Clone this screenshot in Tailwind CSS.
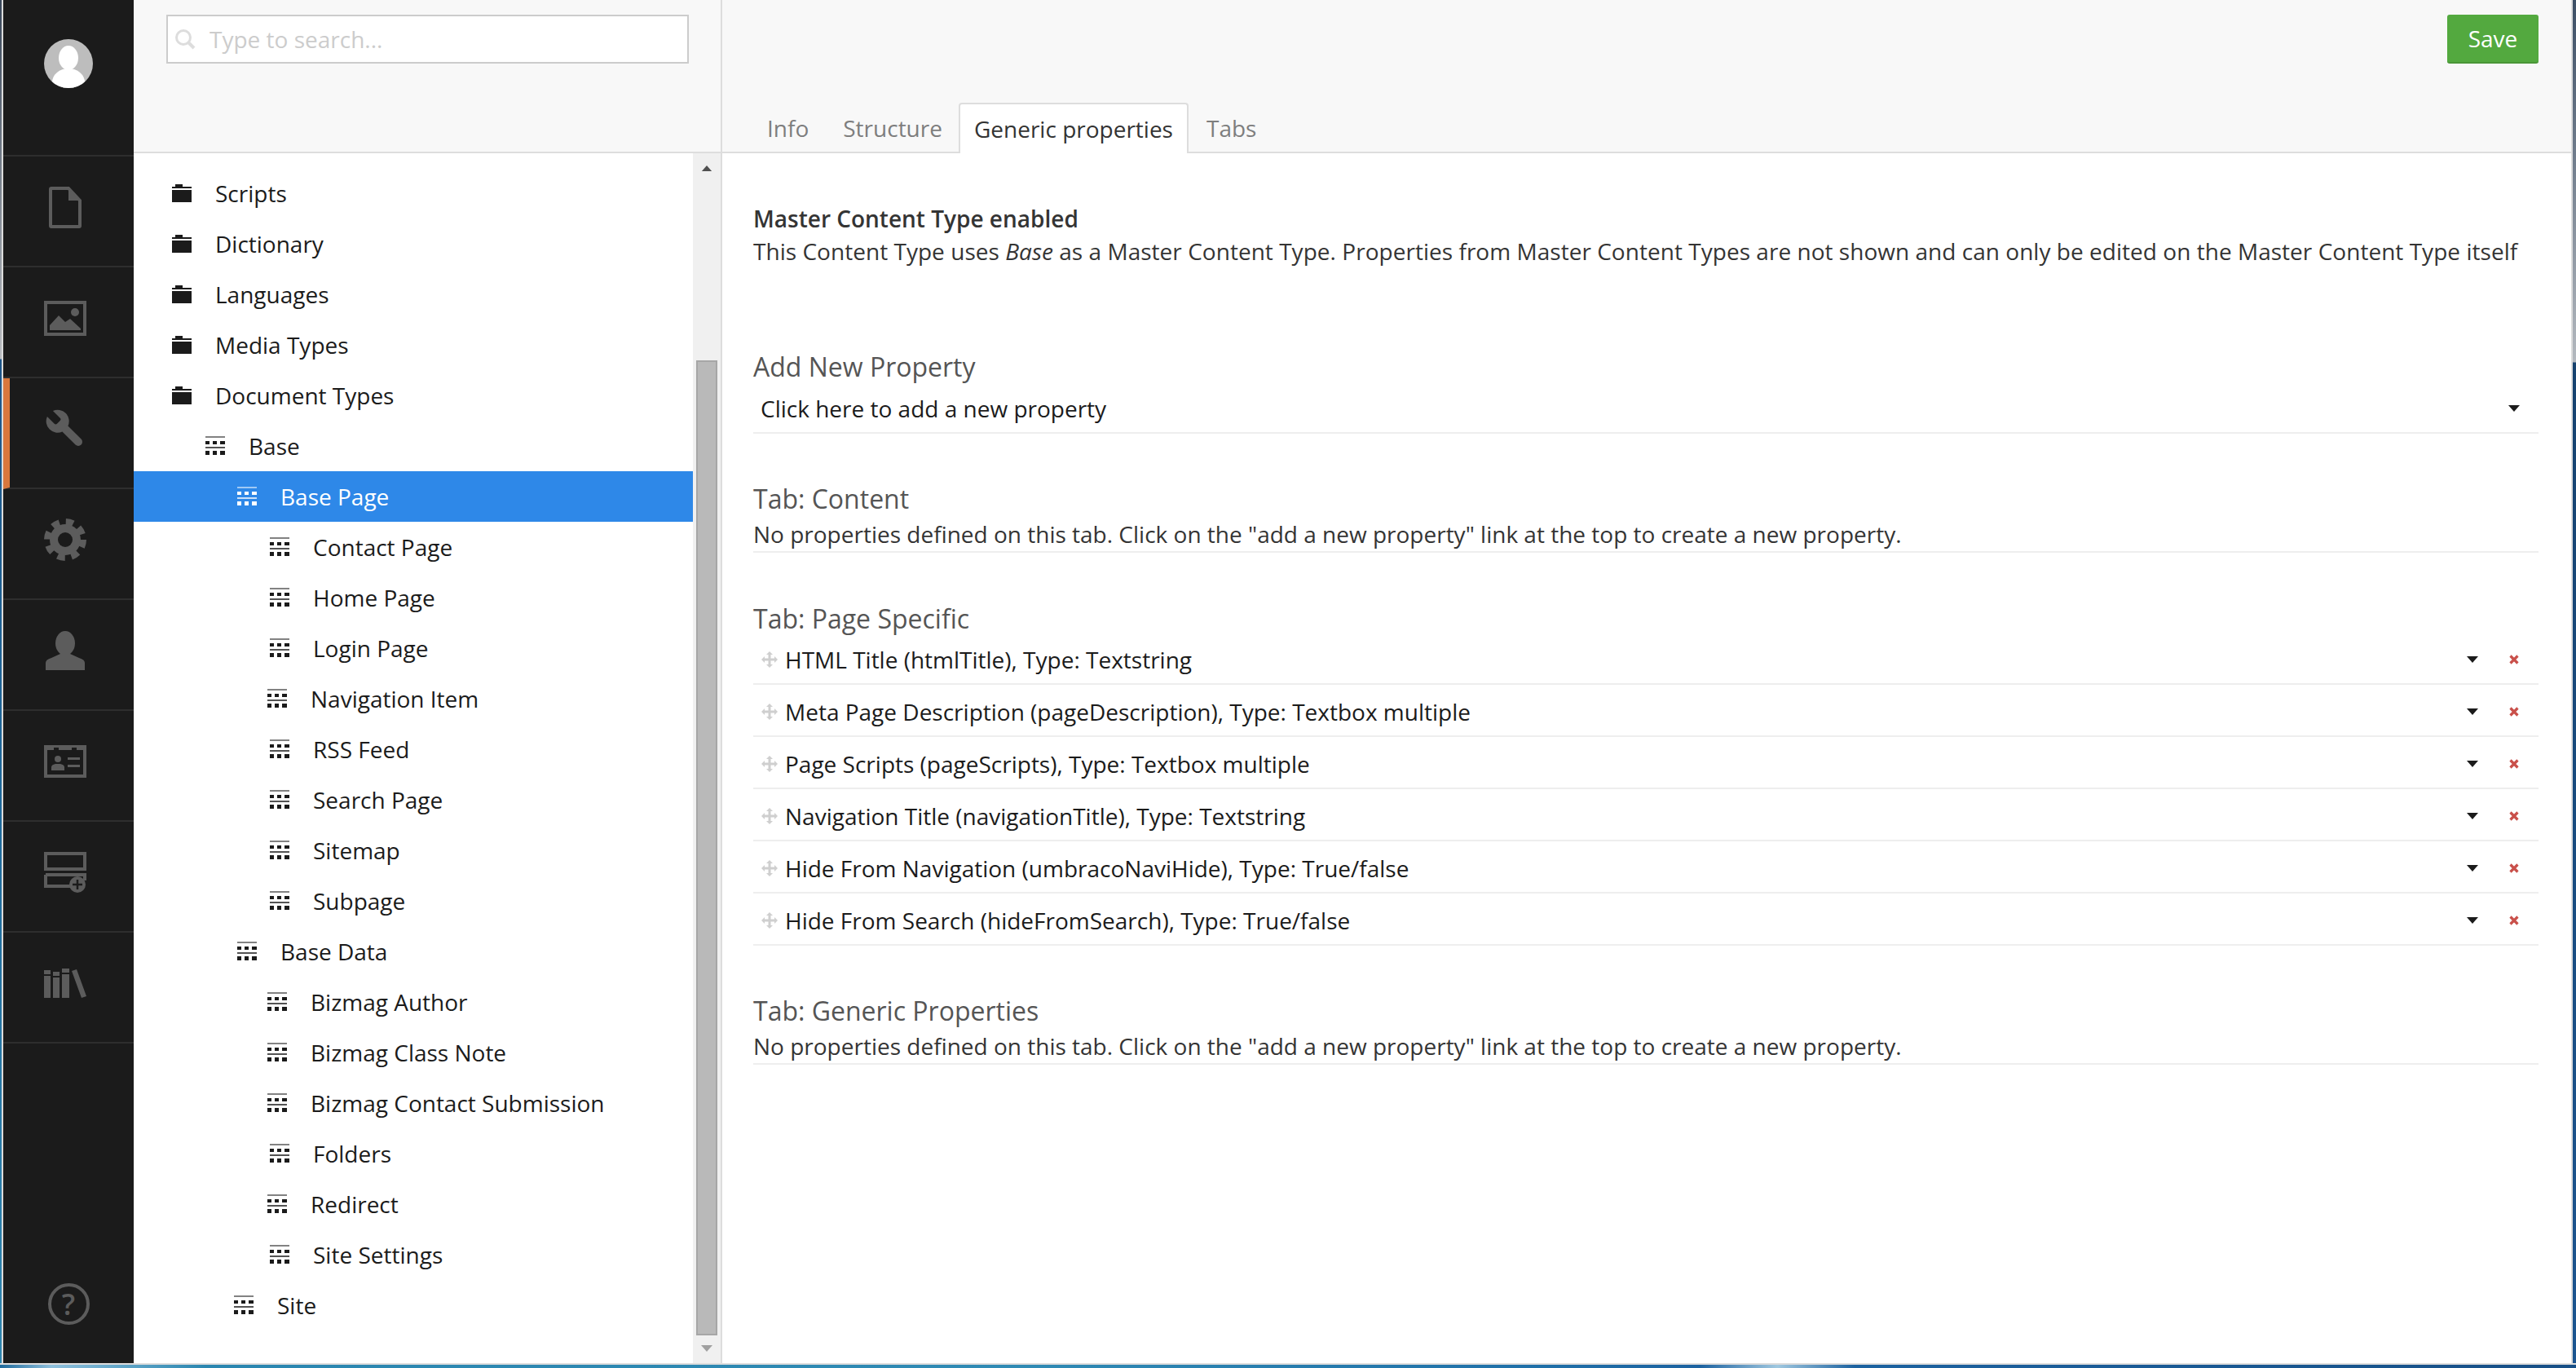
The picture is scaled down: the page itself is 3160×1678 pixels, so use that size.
<!DOCTYPE html>
<html lang="en">
<head>
	<meta charset="UTF-9">
	<title>Document Types - Generic properties</title>
	<script src="https://cdn.jsdelivr.net/npm/@tailwindcss/browser@4"></script>
</head>

<body class="h-[1678px] w-[3160px] overflow-hidden bg-[#16395a] font-['Open_Sans',sans-serif] text-[28px]">
	<svg class="hidden">
		<symbol id="folder" viewBox="0 0 24 22"><path d="M0 3h4V0h9v3h11v19H0z M0 5v2h24V5z" fill-rule="evenodd" fill="currentColor"/></symbol>
		<symbol id="doctype" viewBox="0 0 26 24">
			<rect x="1" y="0" width="24" height="2" fill="currentColor" opacity=".55"/>
			<path d="M1 6h5v4H1z M10 6h5v4h-5z M19 6h6v4h-6z M1 18h5v5H1z M10 18h5v5h-5z M19 18h6v5h-6z" fill="currentColor"/>
			<rect x="1" y="13" width="24" height="2" fill="currentColor" opacity=".75"/>
		</symbol>
		<symbol id="caret" viewBox="0 0 14 8"><path d="M0 0h14L7 8z" fill="currentColor"/></symbol>
		<symbol id="grip" viewBox="0 0 20 20"><polygon points="10,0 14,4 11.5,4 11.5,8.5 16,8.5 16,6 20,10 16,14 16,11.5 11.5,11.5 11.5,16 14,16 10,20 6,16 8.5,16 8.5,11.5 4,11.5 4,14 0,10 4,6 4,8.5 8.5,8.5 8.5,4 6,4" fill="currentColor"/></symbol>
		<symbol id="del" viewBox="0 0 12 12"><path d="M1.5 1.5l9 9 M10.5 1.5l-9 9" stroke="currentColor" stroke-width="3.2"/></symbol>
	</svg>

	<div class="flex h-[1672px]">
		<div class="flex w-[4px] shrink-0">
			<div class="w-[2px] bg-[linear-gradient(to_bottom,#39475a_0,#b9bcc0_440px,#1d5589_441px,#1f6a9c_1000px,#2f86b0_100%)]"></div>
			<div class="w-[2px] bg-[#dcdcdc]"></div>
		</div>

		<!-- main nav -->
		<nav class="flex w-[160px] shrink-0 flex-col bg-[#1b1b1b] text-[#5c5c5c]">
			<div class="flex h-[192px] shrink-0 items-center justify-center border-b-2 border-[#2e2e2e] pb-[34px]">
				<svg width="60" height="60" viewBox="0 0 60 60"><circle cx="30" cy="30" r="30" fill="#bdbdbd"/><clipPath id="av"><circle cx="30" cy="30" r="30"/></clipPath><g clip-path="url(#av)" fill="#fff"><ellipse cx="30" cy="23" rx="12" ry="15"/><ellipse cx="30" cy="53" rx="20" ry="17"/></g></svg>
			</div>
			<div class="flex h-[136px] shrink-0 items-center justify-center border-b-2 border-[#2e2e2e] pr-[8px] pb-[10px]">
				<svg width="40" height="51" viewBox="0 0 40 51"><path d="M3 2h21l14 15v31a1 1 0 0 1-1 1H3a1 1 0 0 1-1-1V3a1 1 0 0 1 1-1z" fill="none" stroke="currentColor" stroke-width="4"/><path d="M24 2v15h14z" fill="currentColor"/></svg>
			</div>
			<div class="flex h-[136px] shrink-0 items-center justify-center border-b-2 border-[#2e2e2e] pr-[8px] pb-[10px]">
				<svg width="52" height="43" viewBox="0 0 52 43"><rect x="2" y="2" width="48" height="39" fill="none" stroke="currentColor" stroke-width="4"/><path d="M7 36v-6l11-12 8 8 6-4 13 12v2z" fill="currentColor"/><circle cx="38" cy="14" r="5" fill="currentColor"/></svg>
			</div>
			<div class="flex h-[136px] shrink-0 items-center justify-center border-b-2 border-l-8 border-[#2e2e2e] border-l-[#d9773d] pr-[8px] pb-[10px]">
				<svg class="-ml-[8px]" width="56" height="56" viewBox="0 0 24 24"><path transform="translate(24 0) scale(-1 1)" d="M14.7 6.3a1 1 0 0 0 0 1.4l1.6 1.6a1 1 0 0 0 1.4 0l3.77-3.77a6 6 0 0 1-7.94 7.94l-6.91 6.91a2.12 2.12 0 0 1-3-3l6.91-6.91a6 6 0 0 1 7.94-7.94l-3.76 3.76z" fill="currentColor"/></svg>
			</div>
			<div class="flex h-[136px] shrink-0 items-center justify-center border-b-2 border-[#2e2e2e] pr-[8px] pb-[10px]">
				<svg width="52" height="52" viewBox="0 0 52 52"><circle cx="26" cy="26" r="19" fill="currentColor"/><circle cx="26" cy="26" r="22" fill="none" stroke="currentColor" stroke-width="8" stroke-dasharray="9.3 8"/><circle cx="26" cy="26" r="9" fill="#1b1b1b"/></svg>
			</div>
			<div class="flex h-[136px] shrink-0 items-center justify-center border-b-2 border-[#2e2e2e] pr-[8px] pb-[10px]">
				<svg width="48" height="48" viewBox="0 0 48 48"><ellipse cx="24" cy="15" rx="12" ry="15" fill="currentColor"/><path d="M0 48V39q0-4 7-6l11-5h12l11 5q7 2 7 6v9z" fill="currentColor"/></svg>
			</div>
			<div class="flex h-[136px] shrink-0 items-center justify-center border-b-2 border-[#2e2e2e] pr-[8px] pb-[10px]">
				<svg width="52" height="40" viewBox="0 0 52 40"><path d="M2 2h48v36H2z" fill="none" stroke="currentColor" stroke-width="4"/><path d="M2 0h48v6H2z" fill="currentColor"/><path d="M12 3h6v5h-6z M34 3h6v5h-6z" fill="#1b1b1b"/><circle cx="17" cy="17" r="4" fill="currentColor"/><path d="M9 31v-4q0-3 5-4h6q5 1 5 4v4z M29 15h15v3H29z M29 24h15v3H29z" fill="currentColor"/></svg>
			</div>
			<div class="flex h-[136px] shrink-0 items-center justify-center border-b-2 border-[#2e2e2e] pr-[8px] pb-[10px]">
				<svg width="52" height="50" viewBox="0 0 52 50"><rect x="2" y="2" width="48" height="19" fill="none" stroke="currentColor" stroke-width="4"/><path d="M2 28h48v7 M2 28v14h30" fill="none" stroke="currentColor" stroke-width="4"/><circle cx="41" cy="40" r="10" fill="currentColor"/><path d="M41 34v12 M35 40h12" stroke="#1b1b1b" stroke-width="2.5"/></svg>
			</div>
			<div class="flex h-[136px] shrink-0 items-center justify-center border-b-2 border-[#2e2e2e] pr-[8px] pb-[10px]">
				<svg width="52" height="36" viewBox="0 0 52 36"><path d="M0 2h8v34H0z M11 4h8v32h-8z M22 0h9v36h-9z M34 3l6-2 12 33-6 2z" fill="currentColor"/><path d="M0 8h8 M11 10h8 M22 6h9" stroke="#1b1b1b" stroke-width="2"/></svg>
			</div>
			<div class="mt-auto mb-[47px] flex justify-center">
				<div class="flex h-[51px] w-[51px] items-center justify-center rounded-full border-4 border-[#5c5c5c] text-[36px] font-semibold leading-none">?</div>
			</div>
		</nav>

		<!-- tree column -->
		<section class="flex w-[722px] shrink-0 flex-col border-r-2 border-[#dddddd] bg-white">
			<div class="h-[188px] shrink-0 border-b-2 border-[#dddddd] bg-[#f8f8f8] pl-[40px] pt-[18px]">
				<div class="flex h-[60px] w-[641px] items-center border-2 border-[#cccccc] bg-white pl-[8px] text-[#cccccc]">
					<svg class="mr-[17px]" width="26" height="26" viewBox="0 0 26 26"><circle cx="11" cy="11" r="8.5" fill="none" stroke="#dddddd" stroke-width="3"/><path d="M17 17l7 7" stroke="#dddddd" stroke-width="4"/></svg>
					<span>Type to search...</span>
				</div>
			</div>
			<div class="flex min-h-0 flex-1">
				<div class="w-[686px] shrink-0 pt-[18px] text-[#1b1b1b]">
					<div class="flex h-[62px] items-center pl-[47px]"><svg class="mr-[29px] h-[22px] w-[24px]"><use href="#folder"/></svg><span>Scripts</span></div>
					<div class="flex h-[62px] items-center pl-[47px]"><svg class="mr-[29px] h-[22px] w-[24px]"><use href="#folder"/></svg><span>Dictionary</span></div>
					<div class="flex h-[62px] items-center pl-[47px]"><svg class="mr-[29px] h-[22px] w-[24px]"><use href="#folder"/></svg><span>Languages</span></div>
					<div class="flex h-[62px] items-center pl-[47px]"><svg class="mr-[29px] h-[22px] w-[24px]"><use href="#folder"/></svg><span>Media Types</span></div>
					<div class="flex h-[62px] items-center pl-[47px]"><svg class="mr-[29px] h-[22px] w-[24px]"><use href="#folder"/></svg><span>Document Types</span></div>
					<div class="flex h-[62px] items-center pl-[87px]"><svg class="mr-[28px] h-[24px] w-[26px]"><use href="#doctype"/></svg><span>Base</span></div>
					<div class="flex h-[62px] items-center bg-[#2e88e8] pl-[126px] text-white"><svg class="mr-[28px] h-[24px] w-[26px]"><use href="#doctype"/></svg><span>Base Page</span></div>
					<div class="flex h-[62px] items-center pl-[166px]"><svg class="mr-[28px] h-[24px] w-[26px]"><use href="#doctype"/></svg><span>Contact Page</span></div>
					<div class="flex h-[62px] items-center pl-[166px]"><svg class="mr-[28px] h-[24px] w-[26px]"><use href="#doctype"/></svg><span>Home Page</span></div>
					<div class="flex h-[62px] items-center pl-[166px]"><svg class="mr-[28px] h-[24px] w-[26px]"><use href="#doctype"/></svg><span>Login Page</span></div>
					<div class="flex h-[62px] items-center pl-[163px]"><svg class="mr-[28px] h-[24px] w-[26px]"><use href="#doctype"/></svg><span>Navigation Item</span></div>
					<div class="flex h-[62px] items-center pl-[166px]"><svg class="mr-[28px] h-[24px] w-[26px]"><use href="#doctype"/></svg><span>RSS Feed</span></div>
					<div class="flex h-[62px] items-center pl-[166px]"><svg class="mr-[28px] h-[24px] w-[26px]"><use href="#doctype"/></svg><span>Search Page</span></div>
					<div class="flex h-[62px] items-center pl-[166px]"><svg class="mr-[28px] h-[24px] w-[26px]"><use href="#doctype"/></svg><span>Sitemap</span></div>
					<div class="flex h-[62px] items-center pl-[166px]"><svg class="mr-[28px] h-[24px] w-[26px]"><use href="#doctype"/></svg><span>Subpage</span></div>
					<div class="flex h-[62px] items-center pl-[126px]"><svg class="mr-[28px] h-[24px] w-[26px]"><use href="#doctype"/></svg><span>Base Data</span></div>
					<div class="flex h-[62px] items-center pl-[163px]"><svg class="mr-[28px] h-[24px] w-[26px]"><use href="#doctype"/></svg><span>Bizmag Author</span></div>
					<div class="flex h-[62px] items-center pl-[163px]"><svg class="mr-[28px] h-[24px] w-[26px]"><use href="#doctype"/></svg><span>Bizmag Class Note</span></div>
					<div class="flex h-[62px] items-center pl-[163px]"><svg class="mr-[28px] h-[24px] w-[26px]"><use href="#doctype"/></svg><span>Bizmag Contact Submission</span></div>
					<div class="flex h-[62px] items-center pl-[166px]"><svg class="mr-[28px] h-[24px] w-[26px]"><use href="#doctype"/></svg><span>Folders</span></div>
					<div class="flex h-[62px] items-center pl-[163px]"><svg class="mr-[28px] h-[24px] w-[26px]"><use href="#doctype"/></svg><span>Redirect</span></div>
					<div class="flex h-[62px] items-center pl-[166px]"><svg class="mr-[28px] h-[24px] w-[26px]"><use href="#doctype"/></svg><span>Site Settings</span></div>
					<div class="flex h-[62px] items-center pl-[122px]"><svg class="mr-[28px] h-[24px] w-[26px]"><use href="#doctype"/></svg><span>Site</span></div>
				</div>
				<!-- scrollbar -->
				<div class="flex w-[34px] shrink-0 flex-col items-center bg-[#f0f0f0]">
					<svg class="mt-[15px] h-[7px] w-[14px] rotate-180 text-[#505050]"><use href="#caret"/></svg>
					<div class="mt-[232px] h-[1196px] w-[26px] border-2 border-[#a6a6a6] bg-[#b9b9b9]"></div>
					<svg class="mt-[12px] h-[8px] w-[14px] text-[#a0a0a0]"><use href="#caret"/></svg>
				</div>
			</div>
		</section>

		<!-- editor -->
		<main class="flex min-w-0 flex-1 flex-col border-r-2 border-[#dddddd] bg-white">
			<header class="h-[188px] shrink-0 border-b-2 border-[#dddddd] bg-[#f8f8f8]">
				<div class="flex h-[126px] justify-end pt-[18px] pr-[40px]">
					<button class="h-[60px] w-[112px] rounded-[3px] border-b-2 border-[#4a9638] bg-[#53a93f] text-white">Save</button>
				</div>
				<div class="-mb-[2px] flex h-[62px] pl-[35px] text-[#7e7e7e]">
					<div class="flex items-center border-2 border-transparent pl-[18px] pr-[20px]">Info</div>
					<div class="flex items-center border-2 border-transparent px-[18px]">Structure</div>
					<div class="flex items-center rounded-t-[4px] border-2 border-b-0 border-[#dddddd] bg-white px-[17px] text-[#333333]">Generic properties</div>
					<div class="flex items-center border-2 border-transparent pl-[20px]">Tabs</div>
				</div>
			</header>

			<div class="pl-[38px] pr-[40px] text-[#343434]">
				<div class="mt-[60px] leading-[40px]">
					<div class="font-semibold">Master Content Type enabled</div>
					<div class="tracking-[0.03px]">This Content Type uses <em>Base</em> as a Master Content Type. Properties from Master Content Types are not shown and can only be edited on the Master Content Type itself</div>
				</div>

				<h2 class="mt-[100px] text-[32px] leading-[44px] text-[#555555]">Add New Property</h2>
				<div class="flex h-[60px] items-center justify-between border-b-2 border-[#eeeeee] pl-[9px] pr-[23px] text-[#1b1b1b]">
					<span>Click here to add a new property</span>
					<svg class="h-[8px] w-[14px]"><use href="#caret"/></svg>
				</div>

				<h2 class="mt-[58px] text-[32px] leading-[44px] text-[#555555]">Tab: Content</h2>
				<div class="flex h-[44px] items-center border-b-2 border-[#eeeeee]">No properties defined on this tab. Click on the "add a new property" link at the top to create a new property.</div>

				<h2 class="mt-[60px] h-[38px] text-[32px] leading-[41px] text-[#555555]">Tab: Page Specific</h2>
				<div class="flex h-[64px] items-center border-b-2 border-[#eeeeee] pl-[10px] pr-[24px] pt-[4px] text-[#1b1b1b]">
					<svg class="mr-[9px] h-[20px] w-[20px] text-[#cfcfcf]"><use href="#grip"/></svg>
					<span class="flex-1">HTML Title (htmlTitle), Type: Textstring</span>
					<svg class="mr-[38px] h-[8px] w-[14px]"><use href="#caret"/></svg>
					<svg class="h-[12px] w-[12px] text-[#c9504a]"><use href="#del"/></svg>
				</div>
				<div class="flex h-[64px] items-center border-b-2 border-[#eeeeee] pl-[10px] pr-[24px] pt-[4px] text-[#1b1b1b]">
					<svg class="mr-[9px] h-[20px] w-[20px] text-[#cfcfcf]"><use href="#grip"/></svg>
					<span class="flex-1">Meta Page Description (pageDescription), Type: Textbox multiple</span>
					<svg class="mr-[38px] h-[8px] w-[14px]"><use href="#caret"/></svg>
					<svg class="h-[12px] w-[12px] text-[#c9504a]"><use href="#del"/></svg>
				</div>
				<div class="flex h-[64px] items-center border-b-2 border-[#eeeeee] pl-[10px] pr-[24px] pt-[4px] text-[#1b1b1b]">
					<svg class="mr-[9px] h-[20px] w-[20px] text-[#cfcfcf]"><use href="#grip"/></svg>
					<span class="flex-1">Page Scripts (pageScripts), Type: Textbox multiple</span>
					<svg class="mr-[38px] h-[8px] w-[14px]"><use href="#caret"/></svg>
					<svg class="h-[12px] w-[12px] text-[#c9504a]"><use href="#del"/></svg>
				</div>
				<div class="flex h-[64px] items-center border-b-2 border-[#eeeeee] pl-[10px] pr-[24px] pt-[4px] text-[#1b1b1b]">
					<svg class="mr-[9px] h-[20px] w-[20px] text-[#cfcfcf]"><use href="#grip"/></svg>
					<span class="flex-1">Navigation Title (navigationTitle), Type: Textstring</span>
					<svg class="mr-[38px] h-[8px] w-[14px]"><use href="#caret"/></svg>
					<svg class="h-[12px] w-[12px] text-[#c9504a]"><use href="#del"/></svg>
				</div>
				<div class="flex h-[64px] items-center border-b-2 border-[#eeeeee] pl-[10px] pr-[24px] pt-[4px] text-[#1b1b1b]">
					<svg class="mr-[9px] h-[20px] w-[20px] text-[#cfcfcf]"><use href="#grip"/></svg>
					<span class="flex-1">Hide From Navigation (umbracoNaviHide), Type: True/false</span>
					<svg class="mr-[38px] h-[8px] w-[14px]"><use href="#caret"/></svg>
					<svg class="h-[12px] w-[12px] text-[#c9504a]"><use href="#del"/></svg>
				</div>
				<div class="flex h-[64px] items-center border-b-2 border-[#eeeeee] pl-[10px] pr-[24px] pt-[4px] text-[#1b1b1b]">
					<svg class="mr-[9px] h-[20px] w-[20px] text-[#cfcfcf]"><use href="#grip"/></svg>
					<span class="flex-1">Hide From Search (hideFromSearch), Type: True/false</span>
					<svg class="mr-[38px] h-[8px] w-[14px]"><use href="#caret"/></svg>
					<svg class="h-[12px] w-[12px] text-[#c9504a]"><use href="#del"/></svg>
				</div>

				<h2 class="mt-[58px] text-[32px] leading-[44px] text-[#555555]">Tab: Generic Properties</h2>
				<div class="flex h-[44px] items-center border-b-2 border-[#eeeeee]">No properties defined on this tab. Click on the "add a new property" link at the top to create a new property.</div>
			</div>
		</main>

		<div class="w-[4px] shrink-0 bg-[linear-gradient(to_bottom,#3d4f66_0,#b4b9bf_444px,#16426f_445px,#1c5590_100%)]"></div>
	</div>
	<div class="h-[2px] bg-[#dddddd]"></div>
	<div class="h-[4px] bg-[linear-gradient(to_right,#1f6a9c_0,#8fc0dc_2%,#2a86b0_8%,#2f8ab4_40%,#1f6fa8_60%,#1c62a0_66%,#a0c8e0_69%,#1c62a0_72%,#174f86_100%)]"></div>
</body>
</html>
